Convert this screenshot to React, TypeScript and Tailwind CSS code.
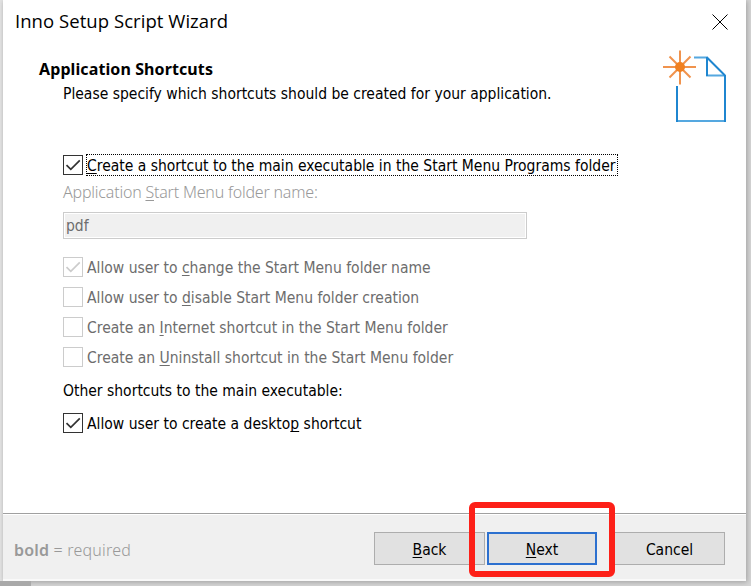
import React from 'react';

function Check({ checked = false, disabled = false }: { checked?: boolean; disabled?: boolean }) {
  return (
    <span
      className={`flex h-5 w-5 shrink-0 items-center justify-center border bg-white ${
        disabled ? 'border-[#cccccc]' : 'border-[#333333]'
      }`}
    >
      {checked && (
        <svg width="18" height="18" viewBox="0 0 18 18" fill="none" className={disabled ? 'text-[#cccccc]' : 'text-[#333333]'}>
          <path d="M2.500 9.200 6.800 13.400 15.800 4.400" stroke="currentColor" strokeWidth="1.700" />
        </svg>
      )}
    </span>
  );
}

function Key({ children }: { children: React.ReactNode }) {
  return <span className="underline decoration-1 underline-offset-2 [text-decoration-skip-ink:none]">{children}</span>;
}

function Option({ children, checked }: { children: React.ReactNode; checked?: boolean }) {
  return (
    <div className="flex h-[30px] items-center gap-1 text-[#6d6d6d]">
      <Check disabled checked={checked} />
      <span className="pt-0.5">{children}</span>
    </div>
  );
}

function NewFileIcon() {
  return (
    <svg width="64" height="76" viewBox="662 48 64 76" fill="none" className="mt-12 shrink-0">
      <g stroke="#55a8e0" strokeWidth="2">
        <path d="M694 57.500H708M706 75.500H725M676 121H726" />
      </g>
      <g stroke="#1f86d0" strokeWidth="2">
        <path d="M677 86V122M725 75V122M707 57V76M707 57.500 725 75.500" />
      </g>
      <g stroke="#f0934d" strokeWidth="2">
        <path d="M680 50.500V84.500M663 67H696M669.500 56.500 690.500 77.500M690.500 56.500 669.500 77.500" />
      </g>
      <circle cx="680" cy="67" r="5" fill="#f08020" />
    </svg>
  );
}

export default function App() {
  return (
    <div className="relative flex h-[586px] w-[751px] overflow-hidden bg-[#d4d4d4] font-['DejaVu_Sans_Condensed','Noto_Sans',sans-serif] text-[15.5px] leading-5 whitespace-nowrap text-black">
      <div className="w-[3px] shrink-0 bg-[#e4e4e4]" />
      <div className="flex h-[581px] w-[743px] shrink-0 flex-col border-b-2 border-[#f9f9f9] bg-white shadow-[1px_1px_5px_#a0a0a0]">
        <div className="flex h-[513px] shrink-0 justify-between pr-5">
          <div className="flex flex-col">
            <div className="flex h-[41px] items-center pl-3 font-['Open_Sans','Noto_Sans',sans-serif] text-[18.5px]">
              <span className="tracking-[0.05px]">Inno Setup Script Wizard</span>
            </div>
            <div className="mt-[18px] pl-9 font-['Noto_Sans',sans-serif] text-[16px] font-bold">
              <span className="tracking-[0.1px]">Application Shortcuts</span>
            </div>
            <div className="mt-[5px] pl-[60px]"><span>Please specify which shortcuts should be created for your application.</span></div>

            <div className="mt-[50px] flex h-[22px] items-center pl-[60px]">
              <Check checked />
              <div className="ml-[3px] flex h-[22px] w-[532px] items-center border border-dotted border-black pt-0.5">
                <span><Key>C</Key>reate a shortcut to the main executable in the Start Menu Programs folder</span>
              </div>
            </div>
            <div className="mt-[6px] pl-[60px] font-['Noto_Sans',sans-serif] text-[16px] font-light text-[#999999]">
              <span className="tracking-[-0.2px]">Application <Key>S</Key>tart Menu folder name:</span>
            </div>
            <div className="mt-[10px] ml-[60px] flex h-[27px] w-[464px] items-center border border-[#cccccc] bg-[#f0f0f0] pl-[2px] text-[#6d6d6d] shadow-[inset_0_0_0_1px_white]">
              <span>pdf</span>
            </div>
            <div className="mt-[13px] pl-[60px]">
              <Option checked>Allow user to <Key>c</Key>hange the Start Menu folder name</Option>
              <Option>Allow user to <Key>d</Key>isable Start Menu folder creation</Option>
              <Option>Create an <Key>I</Key>nternet shortcut in the Start Menu folder</Option>
              <Option>Create an <Key>U</Key>ninstall shortcut in the Start Menu folder</Option>
            </div>
            <div className="mt-[9px] pl-[60px]"><span>Other shortcuts to the main executable:</span></div>
            <div className="mt-[11px] flex h-[22px] items-center gap-1 pl-[60px]">
              <Check checked />
              <span className="pt-0.5">Allow user to create a deskto<Key>p</Key> shortcut</span>
            </div>
          </div>
          <div className="relative">
            <svg width="16" height="16" viewBox="0 0 16 16" className="absolute top-[14px] -right-[2px]" stroke="black" strokeWidth="1">
              <path d="M.5 .5 15.500 15.500M15.500 .5 .5 15.500" />
            </svg>
            <NewFileIcon />
          </div>
        </div>
        <div className="flex flex-1 items-start border-t border-[#a0a0a0] bg-[#f0f0f0] pt-[18px] pl-[11px] shadow-[inset_0_1px_0_white]">
          <div className="flex h-[33px] w-[360px] items-center pt-0.5 font-['Noto_Sans',sans-serif] text-[16px] font-light text-[#999999]">
            <span className="tracking-[0.2px]"><span className="font-semibold">bold</span> = required</span>
          </div>
          <button className="h-[33px] w-[111px] border border-[#adadad] bg-[#e1e1e1] pt-0.5"><Key>B</Key>ack</button>
          <button className="ml-[2px] h-[33px] w-[110px] border-2 border-[#2c70cf] bg-[#e1e1e1] pt-0.5"><Key>N</Key>ext</button>
          <button className="ml-[17px] h-[33px] w-[111px] border border-[#adadad] bg-[#e1e1e1] pt-0.5">Cancel</button>
        </div>
      </div>
      <div className="absolute bottom-0 left-0 h-[5px] w-[31px] bg-[#a9a9a9]" />
      <div className="absolute top-[502px] left-[469px] h-[75px] w-[146px] rounded-[6px] border-6 border-[#fd2018]" />
    </div>
  );
}
